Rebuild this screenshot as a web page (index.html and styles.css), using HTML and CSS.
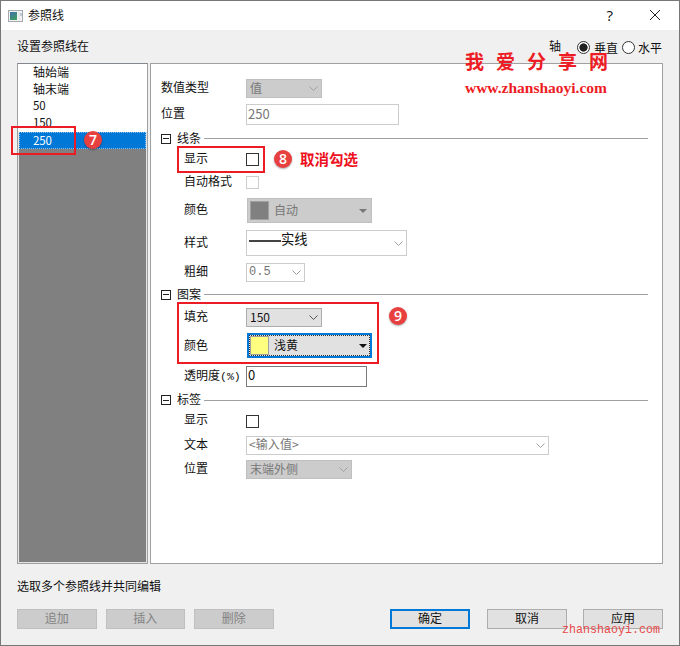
FILE: index.html
```html
<!DOCTYPE html>
<html lang="zh-CN">
<head>
<meta charset="utf-8">
<title>参照线</title>
<link rel="stylesheet" href="styles.css">
</head>
<body>
<div class="window">
  <header class="titlebar">
    <svg class="app-icon" width="16" height="14" viewBox="0 0 16 14"><defs><linearGradient id="g" x2="0.6" y2="1"><stop stop-color="#3f6fb0"/><stop offset="1" stop-color="#3d9a62"/></linearGradient></defs><rect x=".5" y="1.5" width="14" height="11" fill="#f3f3f3" stroke="#a5a9ad"/><rect x="2" y="3" width="7" height="8" fill="url(#g)"/><path d="M11 3v8" stroke="#dce1e5"/><path d="M13 4v3" stroke="#8da4b4"/></svg>
    <h1 class="title">参照线</h1>
    <span class="help">?</span>
    <svg class="close" width="12" height="12" viewBox="0 0 12 12"><path d="M1 1l10 10M11 1L1 11" stroke="#222" fill="none"/></svg>
  </header>

  <div class="topline">
    <span class="heading">设置参照线在</span>
    <span class="axis">轴</span>
    <span class="radio on"></span><span class="radio-text first">垂直</span>
    <span class="radio"></span><span class="radio-text last">水平</span>
  </div>

  <main class="panels">
    <ul class="list">
      <li class="top">轴始端</li>
      <li>轴末端</li>
      <li class="num">50</li>
      <li class="num before">150</li>
      <li class="num selected">250</li>
    </ul>

    <section class="form">
      <div class="row r-type"><label>数值类型</label><div class="select gray w76"><span>值</span><svg class="chev" viewBox="0 0 9 5"><path d="M.5 .5l4 4 4-4"/></svg></div></div>
      <div class="row r-pos"><label>位置</label><div class="input dim">250</div></div>
      <div class="section s-line"><i class="toggle"></i><b>线条</b><hr></div>
      <div class="row sub r-show"><label>显示</label><i class="check"></i></div>
      <div class="row sub r-auto"><label>自动格式</label><i class="check off"></i></div>
      <div class="row sub r-color"><label>颜色</label><div class="color gray"><i class="swatch"></i><span>自动</span><i class="tri"></i></div></div>
      <div class="row sub r-style"><label>样式</label><div class="select white w161"><i class="stroke"></i><span class="solid">实线</span><svg class="chev" viewBox="0 0 9 5"><path d="M.5 .5l4 4 4-4"/></svg></div></div>
      <div class="row sub r-weight"><label>粗细</label><div class="select white w59"><span class="mono">0.5</span><svg class="chev" viewBox="0 0 9 5"><path d="M.5 .5l4 4 4-4"/></svg></div></div>
      <div class="section s-pattern"><i class="toggle"></i><b>图案</b><hr></div>
      <div class="row sub r-fill"><label>填充</label><div class="select live w76"><span class="fillnum">150</span><svg class="chev" viewBox="0 0 9 5"><path d="M.5 .5l4 4 4-4"/></svg></div></div>
      <div class="row sub r-tint"><label>颜色</label><div class="color focus"><i class="swatch yellow"></i><span>浅黄</span><i class="tri"></i></div></div>
      <div class="row sub r-alpha"><label>透明度<span class="pct">(%)</span></label><div class="input strong">0</div></div>
      <div class="section s-label"><i class="toggle"></i><b>标签</b><hr></div>
      <div class="row sub r-lshow"><label>显示</label><i class="check"></i></div>
      <div class="row sub r-text"><label>文本</label><div class="select white w303"><span class="ph">&lt;输入值&gt;</span><svg class="chev" viewBox="0 0 9 5"><path d="M.5 .5l4 4 4-4"/></svg></div></div>
      <div class="row sub r-place"><label>位置</label><div class="select gray w106"><span>末端外侧</span><svg class="chev" viewBox="0 0 9 5"><path d="M.5 .5l4 4 4-4"/></svg></div></div>
    </section>
  </main>

  <p class="note">选取多个参照线并共同编辑</p>
  <footer class="buttons">
    <div class="btn disabled">追加</div>
    <div class="btn disabled">插入</div>
    <div class="btn disabled">删除</div>
    <div class="btn primary">确定</div>
    <div class="btn cancel">取消</div>
    <div class="btn apply">应用</div>
  </footer>

  <div class="box box-list"></div>
  <div class="box box-show"></div>
  <div class="box box-pattern"></div>
  <div class="badge badge-7">7</div>
  <div class="badge badge-8">8</div>
  <div class="badge badge-9">9</div>
  <div class="callout">取消勾选</div>
  <div class="mark-name">我爱分享网</div>
  <svg class="mark-url" width="146" height="20"><text x="1" y="14" textLength="142" lengthAdjust="spacingAndGlyphs">www.zhanshaoyi.com</text></svg>
  <svg class="mark-site" width="102" height="20"><text x="1" y="14" textLength="98" lengthAdjust="spacingAndGlyphs">zhanshaoyi.com</text></svg>
</div>
</body>
</html>
```
FILE: styles.css
```css
* { box-sizing: border-box; }
body {
  margin: 0;
  font: 12px/16px "Noto Sans CJK SC", sans-serif;
  color: #111;
}
.window {
  position: relative;
  width: 680px;
  height: 646px;
  border: 1px solid #777;
  background: #f0f0f0;
  overflow: hidden;
}
.titlebar {
  display: flex;
  align-items: center;
  height: 29px;
  padding: 0 18px 0 7px;
  background: #fff;
}
.title { margin: -1px auto 0 4px; font-size: 12px; font-weight: 400; }
.help { margin: -2px 36px 0 0; font: 15px "Open Sans", sans-serif; }
.close { margin-top: -1px; }

.topline {
  display: flex;
  align-items: center;
  height: 33px;
  padding: 2px 17px 0 16px;
}
.heading { margin: -3px auto 0 0; }
.axis { margin: -3px 16px 0 0; }
.radio {
  width: 13px;
  height: 13px;
  border: 1px solid #333;
  border-radius: 50%;
  background: #fff;
}
.radio.on { background: radial-gradient(circle, #222 0 3.8px, #fff 4.4px); }
.radio-text.first { margin: 0 4px; }
.radio-text.last { margin-left: 3px; }

.panels { display: flex; gap: 2px; height: 501px; padding: 0 16px; }
.list {
  width: 131px;
  margin: 0;
  padding: 0;
  list-style: none;
  border: 1px solid #a0a0a0;
  border-top-color: #828790;
  background: #808080;
  box-shadow: inset 0 0 0 1px #e4e4e4;
}
.list li { height: 17px; padding-left: 15px; line-height: 17px; background: #fff; }
.list .top { height: 16px; line-height: 15px; }
.list .num { font-size: 11.5px; letter-spacing: -.1px; }
.list .before { height: 18px; }
.list .selected {
  height: 17px;
  margin: 0 1px;
  padding-left: 13px;
  background: #0078d7;
  color: #fff;
  border: 1px dotted #8fc0ea;
  line-height: 14px;
}
.form {
  flex: 1;
  padding-top: 12px;
  border: 1px solid #a0a0a0;
  background: #fff;
}
.row { display: flex; align-items: center; padding-left: 10px; }
.row label { width: 85px; margin-top: -3px; }
.row.sub { padding-left: 33px; }
.row.sub label { width: 62px; white-space: nowrap; }
.r-type { height: 25px; }
.r-pos { height: 27px; }
.r-show { height: 21px; }
.r-auto { height: 24px; }
.r-color { height: 33px; }
.r-style { height: 32px; }
.r-weight { height: 26px; }
.r-fill { height: 26px; }
.r-tint { height: 31px; }
.r-alpha { height: 30px; }
.r-lshow { height: 24px; }
.r-text { height: 24px; }
.r-place { height: 25px; }
.row.r-lshow label { margin-top: -4px; }
.row.r-tint label { margin-top: -2px; }
.pct { font: 11.5px/12px "Liberation Mono", monospace; }

.section { display: flex; align-items: center; padding: 0 14px 0 10px; }
.section b { margin: -2px 3px 0 6px; font-weight: 400; }
.section hr { flex: 1; margin: 0; border: 0; border-top: 1px solid #a0a0a0; }
.s-line { height: 21px; }
.s-pattern { height: 19px; }
.s-label { height: 18px; }
.toggle {
  width: 10px;
  height: 10px;
  border: 1px solid #222;
  background: linear-gradient(#222, #222) center / 6px 1px no-repeat;
}

.select, .color, .input { display: flex; align-items: center; border: 1px solid; }
.select { height: 19px; padding: 0 3px; }
.select span { margin: -2px auto 0 0; }
.select.gray { background: #ccc; border-color: #bfbfbf; color: #777; }
.select.white { background: #fff; border-color: #ccc; color: #777; padding-left: 2px; }
.select.live { background: #e1e1e1; border-color: #adadad; }
.w76 { width: 76px; }
.w161 { width: 161px; }
.w59 { width: 59px; }
.w303 { width: 303px; }
.w106 { width: 106px; }
.r-style .select { height: 26px; }
.chev { width: 9px; height: 5px; fill: none; stroke: #a0a0a0; }
.live .chev { stroke: #555; }
.stroke { width: 32px; height: 2px; margin-top: -5px; background: #444; }
.select .solid { margin-top: -8px; font-size: 13.3px; color: #111; }
.select .mono { margin-top: 0; font: 12px "Liberation Mono", monospace; }
.select .fillnum { margin-top: -1px; }
.select .ph { letter-spacing: .1px; }

.input {
  width: 153px;
  height: 21px;
  padding: 0 0 2px 1px;
  border-color: #ccc;
  background: #fff;
  font-size: 13px;
}
.input.strong { width: 121px; border-color: #7a7a7a; }
.input.dim { color: #777; }

.check { width: 13px; height: 13px; border: 1px solid #333; background: #fff; }
.check.off { border-color: #ccc; }

.color { width: 125px; height: 25px; margin-left: 1px; padding: 0 4px 0 2px; }
.color.gray { background: #ccc; border-color: #bfbfbf; color: #777; }
.color.focus {
  background: #e1e1e1;
  border: 2px solid #0078d7;
  outline: 1px dotted #333;
  outline-offset: -3px;
  padding: 0 3px 0 1px;
}
.color span { margin: -1px auto 0 5px; }
.swatch { width: 19px; height: 19px; border: 1px solid #a0a0a0; background: #808080; }
.swatch.yellow { background: #ffff80; }
.tri { border: 4px solid transparent; border-top-color: currentColor; border-bottom: 0; }

.note { height: 45px; margin: 0; padding: 14px 16px 0; }
.buttons { display: flex; gap: 9px; padding: 0 16px; }
.btn {
  width: 80px;
  height: 20px;
  border: 1px solid #adadad;
  background: #e1e1e1;
  text-align: center;
  line-height: 16px;
}
.btn.disabled { width: 79.5px; background: #ccc; border-color: #bfbfbf; color: #838383; }
.btn.primary { border: 2px solid #0078d7; line-height: 14px; margin-left: auto; }
.btn.cancel { margin-left: 8px; }
.btn.apply { margin-left: 7px; }

/* Tutorial annotations laid over the dialog */
.box { position: absolute; border: 2px solid #ed1c24; }
.box-list { left: 10px; top: 125px; width: 65px; height: 29px; }
.box-show { left: 176px; top: 145px; width: 88px; height: 27px; }
.box-pattern { left: 176px; top: 301px; width: 202px; height: 62px; }
.badge {
  position: absolute;
  width: 18px;
  height: 18px;
  border-radius: 50%;
  background: #e8403f;
  color: #fff;
  font: 600 14px/17px "Open Sans", sans-serif;
  text-align: center;
  box-shadow: 0 1px 2px #0005;
}
.badge-7 { left: 83px; top: 130px; }
.badge-8 { left: 273px; top: 149px; }
.badge-9 { left: 388px; top: 306px; }
.callout, .mark-name, .mark-url, .mark-site { position: absolute; white-space: nowrap; }
.callout { left: 299px; top: 148px; color: #ed1020; font-size: 14.5px; line-height: 20px; font-weight: 700; }
.mark-name { left: 464px; top: 46px; color: #ed1c24; font-size: 19px; line-height: 27px; font-weight: 700; letter-spacing: 12px; }
.mark-url { left: 463px; top: 78px; font: bold 14px "Liberation Serif", serif; fill: #ed1c24; }
.mark-site { left: 560px; top: 618px; font: 13px "Liberation Mono", monospace; fill: #e84a4a; }
```
